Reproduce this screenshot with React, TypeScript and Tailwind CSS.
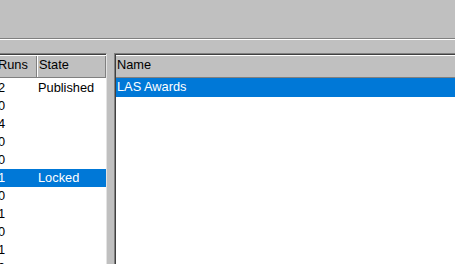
const runs = [
  { runs: "2", state: "Published" },
  { runs: "0", state: "" },
  { runs: "4", state: "" },
  { runs: "0", state: "" },
  { runs: "0", state: "" },
  { runs: "1", state: "Locked", selected: true },
  { runs: "0", state: "" },
  { runs: "1", state: "" },
  { runs: "0", state: "" },
  { runs: "1", state: "" },
  { runs: "0", state: "" },
];

const names = [{ name: "LAS Awards", selected: true }];

function HeaderCell({ label, first }: { label: string; first?: boolean }) {
  return (
    <div
      className={
        "h-full pt-px leading-[15px] border-r border-r-[#808080] " +
        (first ? "pl-[3px]" : "pl-px border-l border-l-white")
      }
    >
      {label}
    </div>
  );
}

export default function App() {
  return (
    <div className="w-[455px] h-[264px] overflow-hidden bg-[#c0c0c0] text-black text-[12.8px] font-['Liberation_Sans',Arial,sans-serif]">
      {/* Toolbar area */}
      <div className="h-[38px]" />
      <div className="h-px bg-[#808080]" />
      <div className="h-px bg-white" />
      <div className="h-[13px]" />

      <div className="flex h-[211px]">
        {/* Left list, scrolled horizontally */}
        <div className="w-[107px] shrink-0 overflow-hidden bg-white border-t border-t-[#808080] border-r border-r-[#e3e3e3]">
          <div className="border-t border-t-[#404040] -ml-[5px]">
            <div className="grid grid-cols-[42px_1fr] h-[23px] bg-[#c0c0c0] border-t border-t-white border-b border-b-[#808080]">
              <HeaderCell label="Runs" first />
              <HeaderCell label="State" />
            </div>
            <div className="pt-px">
              {runs.map((r, i) => (
                <div
                  key={i}
                  className={
                    "grid grid-cols-[42px_1fr] h-[18px] leading-[17px] " +
                    (r.selected ? "bg-[#0078d7] text-white" : "")
                  }
                >
                  <div className="pl-[3px]">{r.runs}</div>
                  <div className="pl-px">{r.state}</div>
                </div>
              ))}
            </div>
          </div>
        </div>

        <div className="w-[7px] shrink-0" />

        {/* Right list */}
        <div className="flex-1 min-w-0 border-l border-t border-[#808080]">
          <div className="h-full bg-white border-l border-t border-[#404040]">
            <div className="h-[23px] pt-px leading-[15px] pl-px bg-[#c0c0c0] border-t border-t-white border-b border-b-[#808080]">
              Name
            </div>
            {names.map((n) => (
              <div
                key={n.name}
                className={
                  "h-[19px] leading-[17px] pl-px " +
                  (n.selected ? "bg-[#0078d7] text-white" : "")
                }
              >
                {n.name}
              </div>
            ))}
          </div>
        </div>
      </div>
    </div>
  );
}
